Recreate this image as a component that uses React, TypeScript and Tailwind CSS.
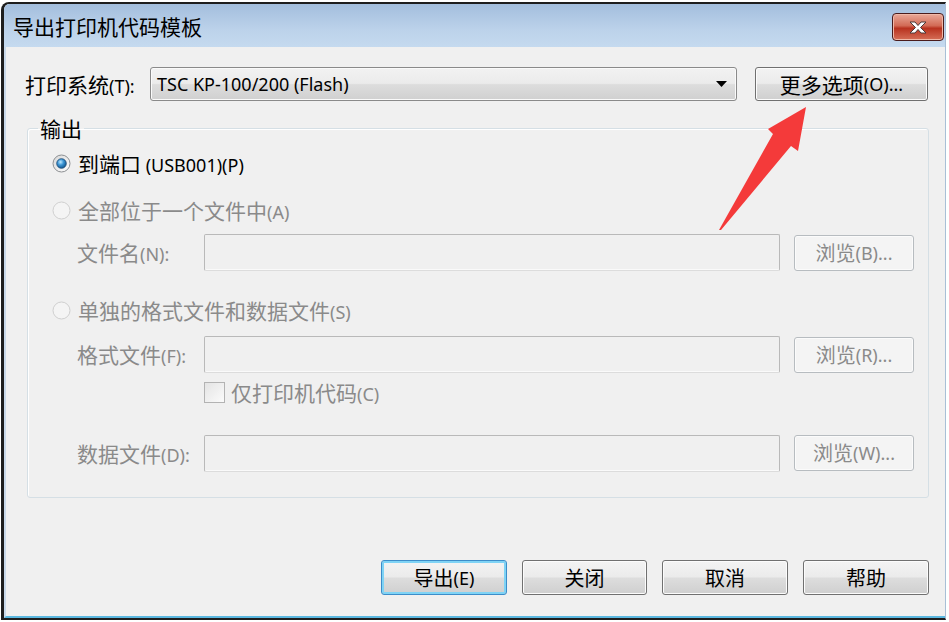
import React from 'react';

const FONT = "font-['Noto_Sans','Noto_Sans_CJK_SC',sans-serif]";

// CJK runs are set a bit larger than the Latin runs, like the original UI font
function T({ s, big = 'text-[21px]' }: { s: string; big?: string }) {
  const parts = s.split(/([\u3000-\u9fff]+)/);
  return (
    <>
      {parts.map((p, i) =>
        /[\u3000-\u9fff]/.test(p) ? (
          <span key={i} className={`${big} font-['Noto_Sans_CJK_SC',sans-serif]`}>
            {p}
          </span>
        ) : (
          <span key={i}>{p}</span>
        )
      )}
    </>
  );
}

function Radio({ checked, disabled }: { checked?: boolean; disabled?: boolean }) {
  return (
    <svg width="19" height="19" viewBox="0 0 19 19" className="shrink-0">
      <defs>
        <linearGradient id="rbg" x1="0" y1="0" x2="1" y2="1">
          <stop offset="0" stopColor="#d6d6d6" />
          <stop offset="1" stopColor="#ffffff" />
        </linearGradient>
        <radialGradient id="rdot" cx="0.4" cy="0.35" r="0.7">
          <stop offset="0" stopColor="#bfe9ff" />
          <stop offset="0.45" stopColor="#3b95d4" />
          <stop offset="1" stopColor="#0d4f86" />
        </radialGradient>
      </defs>
      <circle
        cx="9.5"
        cy="9.5"
        r="8.5"
        fill={disabled ? '#f4f4f4' : 'url(#rbg)'}
        stroke={disabled ? '#cfcfcf' : '#8c8f92'}
      />
      {checked && <circle cx="9.5" cy="9.5" r="4.8" fill="url(#rdot)" stroke="#1d4a75" strokeWidth="0.8" />}
    </svg>
  );
}

function Btn({
  children,
  w,
  h = 'h-[35px]',
  disabled,
  focused,
}: {
  children: React.ReactNode;
  w: string;
  h?: string;
  disabled?: boolean;
  focused?: boolean;
}) {
  const base = `${w} ${h} flex items-center justify-center rounded-[3px] leading-none shrink-0`;
  if (disabled)
    return (
      <div className={`${base} border border-[#b7bcc0] bg-[#f4f4f4] text-[#8a8a8a] shadow-[inset_0_0_0_1px_#fbfbfb]`}>
        {children}
      </div>
    );
  return (
    <div
      className={`${base} border ${
        focused ? 'border-[#3c8dc9] shadow-[inset_0_0_0_2px_#7fd3f5]' : 'border-[#707070] shadow-[inset_0_0_0_1px_#fcfcfc]'
      } bg-[linear-gradient(#f3f3f3_0%,#ebebeb_48%,#dddddd_52%,#cfcfcf_100%)] text-black`}
    >
      {children}
    </div>
  );
}

function Field({ label }: { label: string }) {
  return (
    <div className="w-[127px] shrink-0 text-[#8a8a8a] leading-none">
      <T s={label} />
    </div>
  );
}

function Input() {
  return (
    <div className="w-[576px] h-[37px] shrink-0 rounded-[2px] border border-[#b9b9b9] border-b-[#dcdcdc] bg-[#f0f0f0] shadow-[inset_0_-1px_0_#fafafa]" />
  );
}

export default function App() {
  return (
    <div className={`relative w-[949px] h-[622px] bg-white overflow-hidden text-[18px] text-black ${FONT}`}>
      <div className="ml-[1px] mt-[2px] w-[945px] h-[618px] flex flex-col rounded-tl-[8px] overflow-hidden border-l-[3px] border-t-[2px] border-b-[2px] border-r border-l-[#1e1e1e] border-t-[#1e1e1e] border-b-[#1e1e1e] border-r-[#a9bfd6]">
        {/* title bar */}
        <div className="h-[43px] shrink-0 flex items-start justify-between bg-[linear-gradient(#a3bedd,#bcd2ea_60%,#c5daef)]">
          <div className="pl-[9px] pt-[9px] h-[35px] leading-[26px]">
            <T s="导出打印机代码模板" />
          </div>
          <div className="mt-[9px] mr-[1px] w-[52px] h-[28px] rounded-[4px] border border-[#4a1c1c] bg-[linear-gradient(#e9a999,#d26a55_45%,#b8321f_55%,#d56e57)] flex items-center justify-center shadow-[inset_0_0_0_1px_#f0b8a8]">
            <svg width="22" height="15" viewBox="0 0 22 15">
              <path
                d="M3 2h5l3 3.5L14 2h5l-5.5 5.5L19 13h-5l-3-3.5L8 13H3l5.5-5.5z"
                fill="#ffffff"
                stroke="#4b3a3a"
                strokeWidth="1"
                strokeLinejoin="round"
              />
            </svg>
          </div>
        </div>

        {/* client */}
        <div className="flex-1 flex flex-col bg-[#f0f0f0] border-l-[2px] border-l-[#c9d9ea] border-b-[2px] border-b-[#5bb8e0] pl-[19px] pr-[16px]">
          <div className="mt-[20px] h-[34px] shrink-0 flex items-center">
            <div className="w-[125px] shrink-0 leading-none">
              <T s="打印系统(T):" />
            </div>
            <div className="w-[587px] h-[34px] shrink-0 flex items-center justify-between rounded-[3px] border border-[#8a8a8a] bg-[linear-gradient(#f2f2f2,#ebebeb_48%,#dddddd_52%,#d0d0d0)] shadow-[inset_0_0_0_1px_#fafafa] pl-[6px] pr-[9px]">
              <span className="leading-none">TSC KP-100/200 (Flash)</span>
              <svg width="11" height="6" viewBox="0 0 11 6">
                <path d="M0 0h11L5.5 6z" fill="#000" />
              </svg>
            </div>
            <div className="ml-[18px]">
              <Btn w="w-[173px]" h="h-[34px]">
                <T s="更多选项(O)..." />
              </Btn>
            </div>
          </div>

          <fieldset className="mt-[16px] ml-[2px] w-[902px] shrink-0 rounded-[3px] border border-[#d5dfe5] shadow-[inset_1px_1px_0_#ffffff]">
            <legend className="ml-[10px] px-[2px] h-[22px] leading-[22px]">
              <T s="输出" />
            </legend>
            <div className="flex flex-col pb-[25px]">
              <div className="mt-[12px] h-[24px] flex items-center pl-[24px] gap-[7px]">
                <Radio checked />
                <span className="leading-none">
                  <T s="到端口 (USB001)(P)" />
                </span>
              </div>
              <div className="mt-[23px] h-[24px] flex items-center pl-[24px] gap-[7px] text-[#8a8a8a]">
                <Radio disabled />
                <span className="leading-none">
                  <T s="全部位于一个文件中(A)" />
                </span>
              </div>
              <div className="mt-[12px] h-[37px] flex items-center pl-[49px]">
                <Field label="文件名(N):" />
                <Input />
                <div className="ml-[14px]">
                  <Btn w="w-[120px]" h="h-[36px]" disabled>
                    <T s="浏览(B)..." big="text-[20px]" />
                  </Btn>
                </div>
              </div>
              <div className="mt-[27px] h-[24px] flex items-center pl-[24px] gap-[7px] text-[#8a8a8a]">
                <Radio disabled />
                <span className="leading-none">
                  <T s="单独的格式文件和数据文件(S)" />
                </span>
              </div>
              <div className="mt-[14px] h-[37px] flex items-center pl-[49px]">
                <Field label="格式文件(F):" />
                <Input />
                <div className="ml-[14px]">
                  <Btn w="w-[120px]" h="h-[36px]" disabled>
                    <T s="浏览(R)..." big="text-[20px]" />
                  </Btn>
                </div>
              </div>
              <div className="mt-[9px] h-[21px] flex items-center pl-[176px] gap-[6px] text-[#8a8a8a]">
                <div className="w-[21px] h-[21px] shrink-0 border border-[#b3b3b3] bg-[linear-gradient(135deg,#e4e4e4,#fbfbfb)]" />
                <span className="leading-none">
                  <T s="仅打印机代码(C)" />
                </span>
              </div>
              <div className="mt-[31px] h-[38px] flex items-center pl-[49px]">
                <Field label="数据文件(D):" />
                <Input />
                <div className="ml-[14px]">
                  <Btn w="w-[120px]" h="h-[36px]" disabled>
                    <T s="浏览(W)..." big="text-[20px]" />
                  </Btn>
                </div>
              </div>
            </div>
          </fieldset>

          <div className="mt-[62px] flex justify-end gap-[15px]">
            <Btn w="w-[126px]" focused>
              <T s="导出(E)" big="text-[20px]" />
            </Btn>
            <Btn w="w-[125px]">
              <T s="关闭" big="text-[20px]" />
            </Btn>
            <Btn w="w-[126px]">
              <T s="取消" big="text-[20px]" />
            </Btn>
            <Btn w="w-[126px]">
              <T s="帮助" big="text-[20px]" />
            </Btn>
          </div>
        </div>
      </div>

      {/* annotation arrow */}
      <svg className="absolute left-0 top-0 pointer-events-none" width="949" height="622" viewBox="0 0 949 622">
        <polygon points="719,230 773,134 768,129 806,107 798,151 791,146 721,230" fill="#f43a3a" />
      </svg>
    </div>
  );
}
